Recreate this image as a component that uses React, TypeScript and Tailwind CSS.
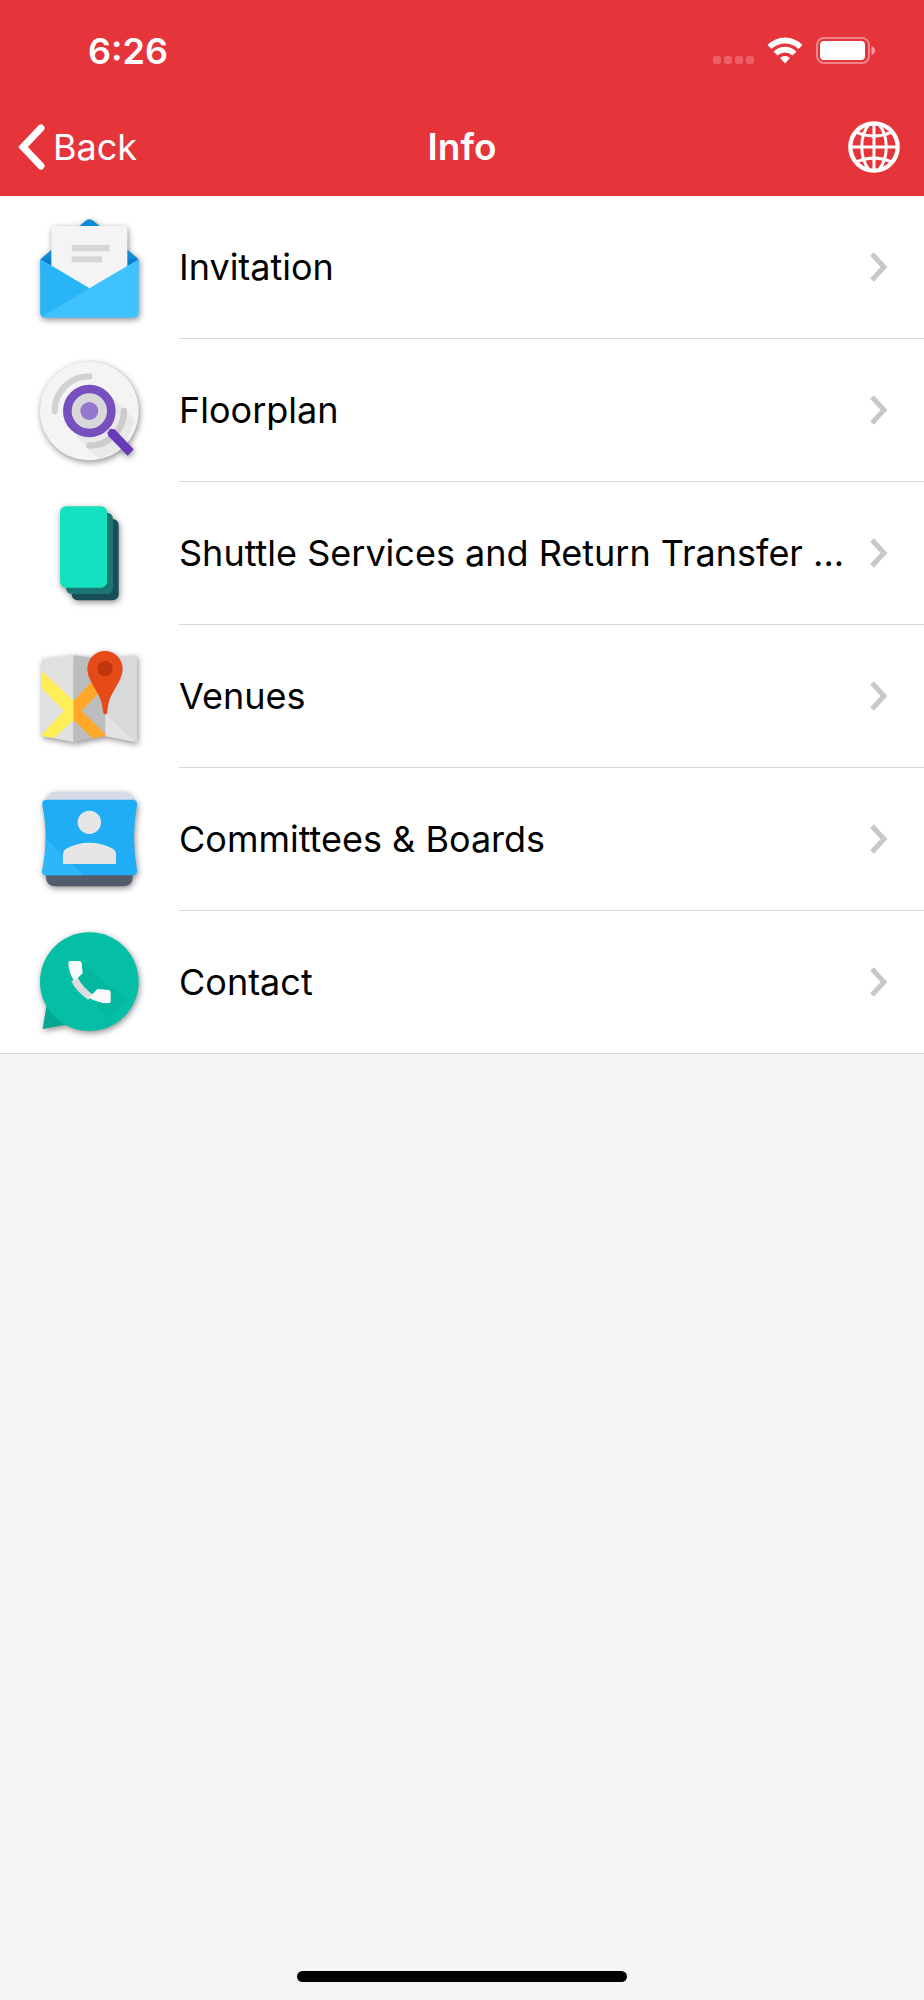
import type { ReactNode } from 'react';

interface MenuItem {
  label: string;
  icon: ReactNode;
}

const InvitationIcon = () => (
  <g transform="translate(0 7)">
    <path d="M62 176 L196 62 Q208 52 221 62 L355 176 L208 264 Z" fill="#0d8bd6" />
    <path d="M62 176 H355 V200 H62 Z" fill="#0a7bc4" />
    <path d="M94 214 V90 Q94 77 107 77 H309 Q322 77 322 90 V214 L208 275 Z" fill="#f4f4f4" />
    <path d="M155 134 H269 V153 H155 Z M155 168 H246 V186 H155 Z" fill="#d6d6d6" />
    <path d="M61 177 L208 264 L356 177 V338 Q356 352 342 352 H75 Q61 352 61 338 Z" fill="#40c2ff" />
    <path d="M61 177 L208 264 L68 348 Q61 344 61 335 Z" fill="#29b4f6" />
  </g>
);

const FloorplanIcon = () => (
  <g transform="translate(0 13)">
    <circle cx="208" cy="197" r="148" fill="#f4f4f4" />
    <path d="M270 150 L343 223 A148 148 0 0 1 238 341 L168 272 Z" fill="#e9e9e9" />
    <path d="M104 197 A104 104 0 0 1 208 93" fill="none" stroke="#d2d2d2" strokeWidth="19" strokeLinecap="round" />
    <path d="M312 197 A104 104 0 0 1 208 301" fill="none" stroke="#cccccc" strokeWidth="19" strokeLinecap="round" />
    <circle cx="208" cy="197" r="66" fill="#d8d8d8" stroke="#7650bf" strokeWidth="26" />
    <circle cx="208" cy="197" r="27" fill="#9575cd" />
    <path d="M262 262 L270 250 L284 252 L341 312 L323 331 L265 272 Z" fill="#673ab7" />
  </g>
);

const ShuttleIcon = () => (
  <g transform="translate(0 4)">
    <rect x="155" y="101" width="141" height="244" rx="18" fill="#184e5a" />
    <rect x="138" y="82" width="141" height="244" rx="18" fill="#1b7572" />
    <rect x="120" y="63" width="141" height="244" rx="18" fill="#14e1bf" />
  </g>
);

const VenuesIcon = () => (
  <g transform="translate(0 10)">
    <path d="M66 93 Q66 87 72 86 L161 75 V335 L66 317 Z" fill="#e0e0e0" />
    <path d="M161 75 L256 87 V317 L161 335 Z" fill="#bdbdbd" />
    <path d="M256 87 L343 75 Q351 75 351 83 V335 L256 317 Z" fill="#d7d9db" />
    <path d="M256 250 L345 335 L256 317 Z" fill="#e3e3e3" />
    <path d="M66 123 L161 211 V270 L102 323 L66 317 V311 L132 241 L66 175 Z" fill="#ffee58" />
    <path d="M161 211 L216 153 L242 182 L185 241 L256 312 V317 L218 324 L161 270 Z" fill="#ffa726" />
    <path
      d="M255 252 Q250 252 249 244 C245 203 235 194 217 161 Q202 135 202 115 A53 53 0 0 1 308 115 Q308 135 293 161 C275 194 266 203 262 244 Q261 252 255 252 Z"
      fill="#e64a19"
    />
    <circle cx="255" cy="115" r="23" fill="#bf360c" />
  </g>
);

const CommitteesIcon = () => (
  <path d="M78 100 Q78 66 108 66 H308 Q338 66 338 100 Z" fill="#d9dae7" />
);

const CommitteesFront = () => (
  <>
    <path d="M78 306 H338 V320 Q338 349 308 349 H108 Q78 349 78 320 Z" fill="#545c6c" />
    <path
      d="M80 89 H337 Q352 89 351 104 Q342 155 342 203 Q342 250 351 301 Q352 316 337 316 H80 Q65 316 67 301 Q77 250 77 203 Q77 155 67 104 Q65 89 80 89 Z"
      fill="#20adf5"
    />
    <path d="M77 206 L190 316 H80 Q65 316 67 301 Q77 250 77 206 Z" fill="#2fb6f8" />
    <circle cx="208" cy="157" r="35" fill="#e6e6e6" />
    <path d="M129 282 V253 Q129 241 141 235 Q170 218 208 218 Q246 218 276 235 Q288 241 288 253 V282 Z" fill="#e6e6e6" />
  </>
);

const ContactIcon = () => (
  <g transform="translate(0 9)">
    <path d="M80 270 L68 342 L150 327 Z" fill="#02a892" />
    <circle cx="208" cy="200" r="148" fill="#04bfa5" />
    <path d="M186 142 L322 258 L266 312 L210 248 L162 180 Z" fill="#04b8a0" />
    <path d="M154 199 Q168 229 204 254 L222 241 Q190 220 174 189 Z" fill="#dcdcdc" />
    <path
      d="M151 138 H178 Q184 138 185 144 L188 175 L163 199 Q146 174 145 145 Q145 138 151 138 Z"
      fill="#fafafa"
    />
    <path
      d="M272 232 V258 Q272 265 265 265 Q233 264 207 248 L232 222 L266 225 Q272 226 272 232 Z"
      fill="#fafafa"
    />
  </g>
);

const MENU_ITEMS: MenuItem[] = [
  { label: 'Invitation', icon: <InvitationIcon /> },
  { label: 'Floorplan', icon: <FloorplanIcon /> },
  { label: 'Shuttle Services and Return Transfer ...', icon: <ShuttleIcon /> },
  { label: 'Venues', icon: <VenuesIcon /> },
  {
    label: 'Committees & Boards',
    icon: (
      <>
        <CommitteesIcon />
        <CommitteesFront />
      </>
    ),
  },
  { label: 'Contact', icon: <ContactIcon /> },
];

function StatusBar() {
  return (
    <div className="flex h-[98px] items-center justify-between pt-[3px] pr-12 pl-[88px]">
      <span className="text-[36px] font-semibold">6:26</span>
      <div className="flex items-center gap-3">
        <svg className="h-[27px] w-[42px]" viewBox="0 0 42 27" fill="#fff" fillOpacity="0.22">
          <rect x="0" y="19" width="8" height="8" rx="2.5" />
          <rect x="11" y="19" width="8" height="8" rx="2.5" />
          <rect x="22" y="19" width="8" height="8" rx="2.5" />
          <rect x="33" y="19" width="8" height="8" rx="2.5" />
        </svg>
        <svg className="h-[27px] w-9" viewBox="0 0 36 27" fill="#fff">
          <path d="M0.5 8 Q8 0.5 18 0.5 Q28 0.5 35.5 8 L31.5 12 Q25.5 6.5 18 6.5 Q10.5 6.5 4.5 12 Z" />
          <path d="M6.5 14.5 Q11.5 9.8 18 9.8 Q24.5 9.8 29.5 14.5 L25.5 18.5 Q22 15.5 18 15.5 Q14 15.5 10.5 18.5 Z" />
          <path d="M13 21 Q15 19 18 19 Q21 19 23 21 L18 26.5 Z" />
        </svg>
        <svg className="h-[27px] w-[61px]" viewBox="0 0 61 27">
          <rect x="2" y="1" width="52" height="25" rx="7" fill="none" stroke="#fff" strokeOpacity="0.4" strokeWidth="2" />
          <rect x="5" y="4" width="45" height="19" rx="4" fill="#fff" />
          <path d="M56.5 9 Q60 10 60 13.5 Q60 17 56.5 18 Z" fill="#fff" fillOpacity="0.5" />
        </svg>
      </div>
    </div>
  );
}

function NavBar() {
  return (
    <nav className="grid h-[98px] grid-cols-3 items-center px-[18px]">
      <button type="button" className="flex items-center gap-2 justify-self-start text-[36px]">
        <svg className="h-[46px] w-[27px]" viewBox="0 0 27 46" fill="none" stroke="#fff" strokeWidth="7" strokeLinecap="round">
          <path d="M23 4 L5 23 L23 42" />
        </svg>
        Back
      </button>
      <h1 className="text-center text-[37px] font-semibold">Info</h1>
      <button type="button" aria-label="Language" className="justify-self-end pr-1.5">
        <svg className="size-[52px]" viewBox="0 0 156 156" fill="none" stroke="#fff" strokeWidth="9">
          <circle cx="78" cy="78" r="71" strokeWidth="13" />
          <path d="M78 8 V148 M8 78 H148" />
          <path d="M63 10 C34 46 34 110 63 146 M93 10 C122 46 122 110 93 146" />
          <path d="M26 34 Q78 56 130 34 M26 122 Q78 100 130 122" />
        </svg>
      </button>
    </nav>
  );
}

function MenuRow({ label, icon }: MenuItem) {
  return (
    <li className="group">
      <a href="#" className="flex h-[143px] items-stretch pl-5 group-last:border-b group-last:border-[#d8d8d8]">
        <svg
          className="mr-[19px] size-[140px] shrink-0 self-center drop-shadow-[1px_2px_3px_rgba(0,0,0,0.45)]"
          viewBox="0 0 420 420"
        >
          {icon}
        </svg>
        <div className="flex min-w-0 flex-1 items-center justify-between border-b border-[#d8d8d8] pr-9 group-last:border-b-0">
          <span className="truncate text-[36px]">{label}</span>
          <svg className="h-[30px] w-[18px] shrink-0" viewBox="0 0 18 30" fill="none" stroke="#c8c8c8" strokeWidth="5">
            <path d="M2 2 L14 15 L2 28" />
          </svg>
        </div>
      </a>
    </li>
  );
}

export default function App() {
  return (
    <div className="flex min-h-screen flex-col bg-[#f6f5f3] font-['Inter',sans-serif] text-black">
      <header className="bg-[#e5343a] text-white">
        <StatusBar />
        <NavBar />
      </header>
      <main className="flex-1">
        <ul className="bg-white">
          {MENU_ITEMS.map((item) => (
            <MenuRow key={item.label} {...item} />
          ))}
        </ul>
      </main>
      <div className="mx-auto mb-[18px] h-[11px] w-[330px] rounded-full bg-black" />
    </div>
  );
}
